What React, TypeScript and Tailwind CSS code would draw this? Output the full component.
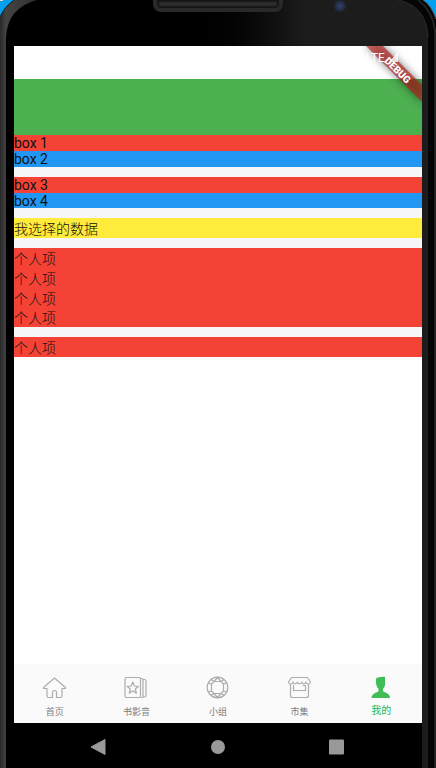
import React, { useState } from "react";

const tabs = [
  { label: "首页", icon: HomeIcon },
  { label: "书影音", icon: MediaIcon },
  { label: "小组", icon: GroupIcon },
  { label: "市集", icon: MarketIcon },
  { label: "我的", icon: PersonIcon },
];

function HomeIcon() {
  return (
    <svg className="h-6 w-6" viewBox="0 0 24 24" fill="none" stroke="#adadad" strokeWidth="1.2" strokeLinejoin="round" aria-hidden="true">
      <path d="M11.500 2 .5 11.500v1H4v7.500a1.500 1.500 0 0 0 1.500 1.500h4v-5a2 2 0 0 1 4 0v5h4A1.500 1.500 0 0 0 19 20v-7.500h3.500v-1z" />
    </svg>
  );
}

function MediaIcon() {
  return (
    <svg className="h-6 w-6" viewBox="0 0 24 24" fill="none" stroke="#adadad" strokeWidth="1.2" strokeLinejoin="round" aria-hidden="true">
      <rect x="1" y="1.5" width="15.5" height="20" rx="1.5" />
      <path d="M16.500 2.500h1.500a1 1 0 0 1 1 1v17a1 1 0 0 1-1 1h-1.500M19 3.500h1.500a1.500 1.500 0 0 1 1.500 1.500v14.500a1.500 1.500 0 0 1-1.500 1.500H19M8.800 6l1.600 4 4.100.3-3.200 2.700 1.100 4.200-3.600-2.400-3.600 2.400 1.100-4.200L3.100 10.300l4.100-.3z" />
    </svg>
  );
}

function GroupIcon() {
  return (
    <svg className="h-6 w-6" viewBox="0 0 24 24" fill="none" stroke="#adadad" strokeWidth="1.2" strokeLinejoin="round" aria-hidden="true">
      <circle cx="11.500" cy="11.500" r="10.300" />
      <path d="M8 5.500h7M17.500 8v7M15 17.500H8M5.500 15V8M8 5.500 5.500 8M15 5.500 17.500 8M17.500 15 15 17.500M5.500 15 8 17.500M8 5.500l3.500-4 3.500 4 3-2M8 5.500l-3-2M17.500 8l3.500-1M17.500 15l3.500 1M5.500 8 2 7M5.500 15 2 16M8 17.500l3.500 4 3.500-4 3 2M8 17.500l-3 2" />
    </svg>
  );
}

function MarketIcon() {
  return (
    <svg className="h-6 w-6" viewBox="0 0 24 24" fill="none" stroke="#adadad" strokeWidth="1.2" strokeLinejoin="round" strokeLinecap="round" aria-hidden="true">
      <path d="M3.500 1.500h16L22.500 6c-.5 3-3.500 3-4.500 0-.5 2.500-4 2.500-4.300 0-.5 2.500-4 2.500-4.400 0-.5 2.500-4 2.500-4.300 0-1 3-4 3-4.500 0zM2.500 8.500v11a2 2 0 0 0 2 2h14a2 2 0 0 0 2-2v-11M5.500 9.500v5h12v-5H15" />
    </svg>
  );
}

function PersonIcon() {
  return (
    <svg className="h-6 w-6" viewBox="0 0 24 24" fill="#42bd56" aria-hidden="true">
      <path d="M9 1.500Q12 .5 16 .8v7.500c0 2-1 3.500-2 4.500v2.500c2 1.500 7 2 7 6.700H2.500c0-4.700 5-5.200 7-6.700v-2.500c-1-1-2-2-2-4-.8-.5-1-1.500-.5-2V4c0-1.500.5-2.200 2-2.500z" />
    </svg>
  );
}

function DebugBanner() {
  return (
    <svg className="pointer-events-none absolute right-0 top-0 h-16 w-16" viewBox="0 0 64 64" role="img" aria-label="DEBUG">
      <defs>
        <filter id="ribbon-shadow" x="-50%" y="-50%" width="200%" height="200%">
          <feGaussianBlur stdDeviation="4" />
        </filter>
      </defs>
      <path d="M7 -1 24 -1 65 40V57z" fill="#000" opacity="0.5" filter="url(#ribbon-shadow)" />
      <path d="M7 -1 24 -1 65 40V57z" fill="#b71c1c" opacity="0.630" />
      <text x="8" y="16" fill="#fff" className="font-[Roboto,sans-serif] text-[12px]">LTE</text>
      <path d="M31 16h9V6z" fill="#fff" opacity="0.8" />
      <text x="40" y="28" fill="#fff" textAnchor="middle" transform="rotate(45 40 24)" className="font-[Roboto,sans-serif] text-[10px] font-black">DEBUG</text>
    </svg>
  );
}

function PhoneTop() {
  return (
    <div className="pointer-events-none absolute inset-x-0 top-0 flex h-[46px] justify-between">
      <svg className="h-[46px] w-10" viewBox="0 0 40 46" aria-hidden="true">
        <defs>
          <linearGradient id="rim-left" x1="0" y1="0" x2="1" y2="0">
            <stop offset="0" stopColor="#292929" />
            <stop offset="0.160" stopColor="#434343" />
            <stop offset="1" stopColor="#303030" />
          </linearGradient>
        </defs>
        <path d="M0 0h37Q7 8 6 38V46H0z" fill="url(#rim-left)" />
        <path d="M0 0h14Q5 6 0 17z" fill="#03a0f0" />
        <path d="M14 0Q5 6 0 17" fill="none" stroke="#151515" />
        <path d="M0 0h3v1H0z" fill="#e7d9c6" />
      </svg>
      <svg className="h-[46px] w-10" viewBox="0 0 40 46" aria-hidden="true">
        <path d="M2 0Q31 6 32 38V46h8V0z" fill="#050505" />
        <path d="M2 0Q31 6 32 38" fill="none" stroke="#2b2b2b" />
        <path d="M22 0Q36 10 39 30V46" fill="none" stroke="#222222" strokeWidth="2" />
        <path d="M27 0Q35 5 40 19V0z" fill="#03a0f0" />
        <path d="M27 0Q35 5 40 19" fill="none" stroke="#514b48" />
      </svg>
    </div>
  );
}

function Gap() {
  return <div className="h-[10px] bg-[#f6f6f8]" />;
}

export default function App() {
  const [active, setActive] = useState(4);
  return (
    <div className="relative flex min-h-screen flex-col bg-black bg-linear-to-r from-black from-40% to-[#1c1c1c] to-70% font-[Roboto,'Noto_Sans_CJK_SC',sans-serif]">
      <div className="pointer-events-none absolute inset-y-0 left-0 w-[6px] bg-linear-to-r from-[#292929] to-[#434343]" />
      <div className="pointer-events-none absolute inset-y-0 right-0 w-2 border-r-2 border-[#222222] bg-[#050505]" />
      <PhoneTop />

      <header className="relative flex h-[46px] justify-center">
        <div className="flex h-3 w-[130px] items-center rounded-b-lg border-x-4 border-b-4 border-[#292929] bg-[#303030] shadow-[inset_0_0_2px_2px_#151515]" />
        <div className="absolute right-[90px] top-0 h-3 w-3 rounded-full bg-radial from-[#35416d] to-[#161820]" />
      </header>

      <div className="relative mx-[14px] flex flex-1 flex-col overflow-hidden bg-white text-sm text-[#111111]">
        <main className="flex-1">
          <div className="h-[33px] bg-white" />
          <div className="h-14 bg-[#4caf50]" />
          <p className="h-4 bg-[#f44336] leading-4">box 1</p>
          <p className="h-4 bg-[#2196f3] leading-4">box 2</p>
          <Gap />
          <p className="h-4 bg-[#f44336] leading-4">box 3</p>
          <p className="h-[15px] bg-[#2196f3] leading-4">box 4</p>
          <Gap />
          <p className="h-5 bg-[#ffeb3b] font-light leading-[22px]">我选择的数据</p>
          <Gap />
          <ul className="grid h-[79px] grid-rows-4 bg-[#f44336] font-light leading-[22px]">
            <li>个人项</li>
            <li>个人项</li>
            <li>个人项</li>
            <li>个人项</li>
          </ul>
          <Gap />
          <p className="h-5 bg-[#f44336] font-light leading-[22px]">个人项</p>
        </main>
        <nav className="grid h-[59px] grid-cols-5 bg-[#fafafa]">
          {tabs.map(({ label, icon: Icon }, i) => (
            <button
              key={label}
              type="button"
              onClick={() => setActive(i)}
              className={`flex flex-col items-center gap-1 pt-3 ${i === active ? "text-[10px] leading-[14px] text-[#22b85a]" : "text-[9px] leading-4 text-[#7c7c7c]"}`}
            >
              <Icon />
              <span>{label}</span>
            </button>
          ))}
        </nav>
        <DebugBanner />
      </div>

      <footer className="mx-[14px] flex h-[45px] items-center justify-around bg-black px-[26px] pt-[2px]">
        <button type="button" aria-label="Back">
          <svg className="h-4 w-4" viewBox="0 0 16 16" fill="#999"><path d="M0 8 14 .5v15z" stroke="#999" strokeLinejoin="round" /></svg>
        </button>
        <button type="button" aria-label="Home">
          <svg className="h-4 w-4" viewBox="0 0 16 16" fill="#999"><circle cx="8" cy="8" r="7" /></svg>
        </button>
        <button type="button" aria-label="Recents">
          <svg className="h-4 w-4" viewBox="0 0 16 16" fill="#999"><rect x="0" y="0.500" width="15" height="15" rx="1" /></svg>
        </button>
      </footer>
    </div>
  );
}
